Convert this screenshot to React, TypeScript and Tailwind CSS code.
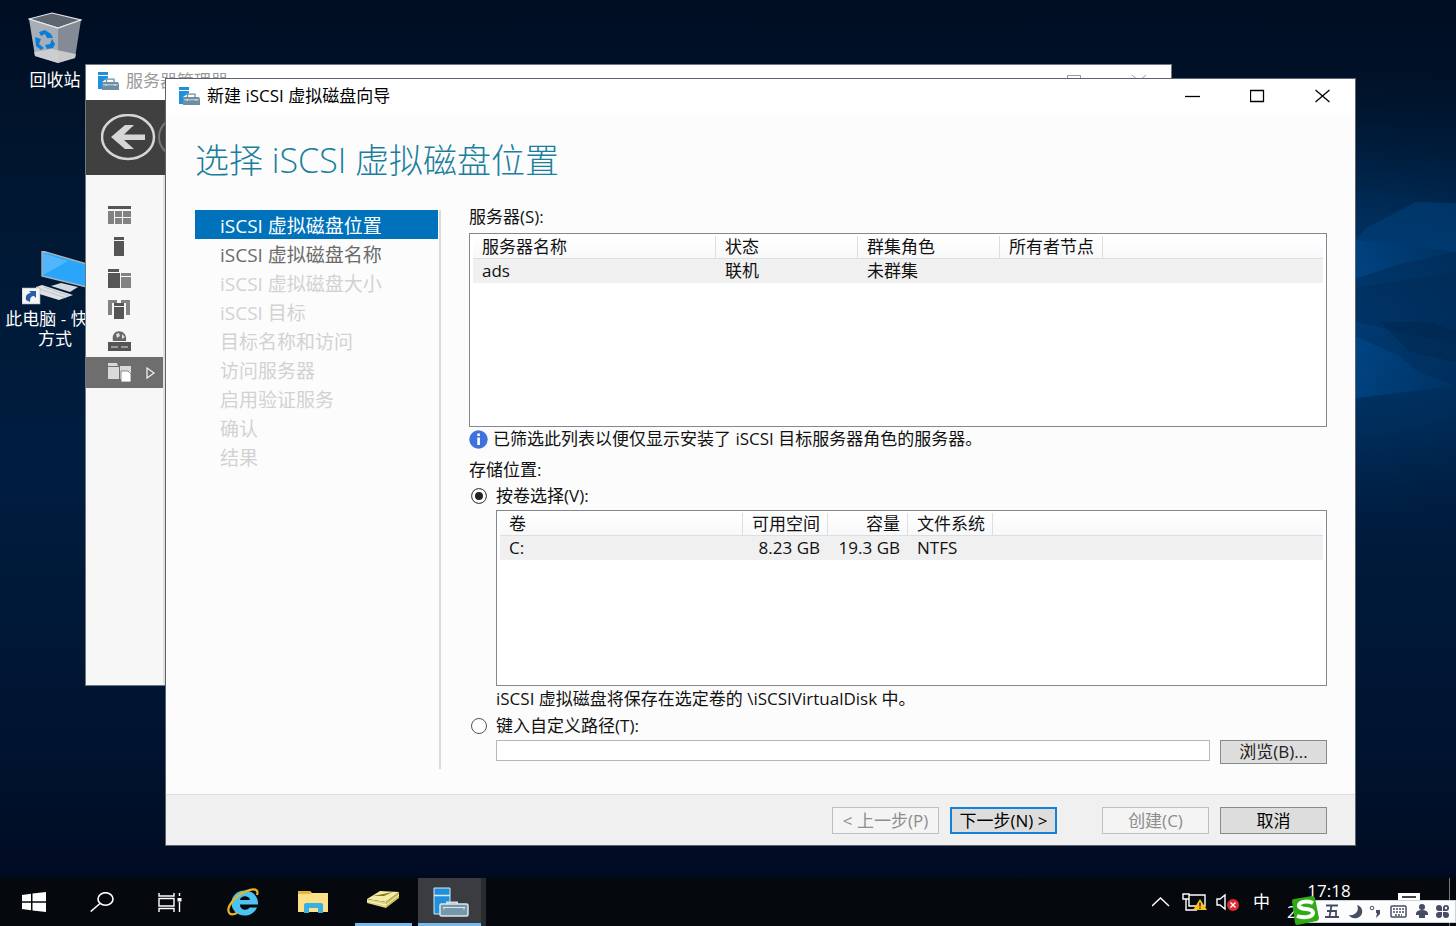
import { useState } from "react";

const steps = [
  { label: "iSCSI 虚拟磁盘位置", state: "active" },
  { label: "iSCSI 虚拟磁盘名称", state: "next" },
  { label: "iSCSI 虚拟磁盘大小", state: "off" },
  { label: "iSCSI 目标", state: "off" },
  { label: "目标名称和访问", state: "off" },
  { label: "访问服务器", state: "off" },
  { label: "启用验证服务", state: "off" },
  { label: "确认", state: "off" },
  { label: "结果", state: "off" },
];

const stepStyles: Record<string, string> = {
  active: "bg-[#0072bc] text-white",
  next: "text-[#6b6b6b]",
  off: "text-[#d2d2d2]",
};

function Wallpaper() {
  return (
    <svg className="absolute inset-0 h-full w-full" viewBox="0 0 1456 926" preserveAspectRatio="none" aria-hidden="true">
      <defs>
        <linearGradient id="base" x1="0" y1="0" x2="0" y2="1">
          <stop offset="0" stopColor="#000d22" />
          <stop offset="0.2" stopColor="#001731" />
          <stop offset="0.5" stopColor="#001d40" />
          <stop offset="0.8" stopColor="#001430" />
          <stop offset="0.95" stopColor="#000b22" />
        </linearGradient>
        <radialGradient id="glow" gradientUnits="userSpaceOnUse" cx="0" cy="0" r="1" gradientTransform="translate(1340 320) scale(420 250)">
          <stop offset="0" stopColor="#003c74" />
          <stop offset="0.45" stopColor="#003263" stopOpacity="0.75" />
          <stop offset="1" stopColor="#001a3a" stopOpacity="0" />
        </radialGradient>
        <linearGradient id="shard" x1="0" y1="0" x2="1" y2="0">
          <stop offset="0" stopColor="#00509a" stopOpacity="0.6" />
          <stop offset="1" stopColor="#004078" stopOpacity="0.25" />
        </linearGradient>
      </defs>
      <rect width="1456" height="926" fill="url(#base)" />
      <rect width="1456" height="926" fill="url(#glow)" />
      <path d="M1366 228 L1416 202 L1456 203 V252 L1356 240 Z" fill="#004684" opacity="0.45" />
      <path d="M1340 238 L1456 252 L1400 264 L1340 284 Z" fill="url(#shard)" />
      <path d="M1340 290 L1456 272 V345 L1340 318 Z" fill="#00274f" opacity="0.35" />
      <path d="M1380 322 H1430 L1456 332 V362 L1410 352 Z" fill="#002144" opacity="0.35" />
      <path d="M1340 330 L1400 356 L1418 372 L1456 386 L1340 400 Z" fill="url(#shard)" />
    </svg>
  );
}

function ServerManagerIcon({ className }: { className: string }) {
  return (
    <svg className={className} viewBox="0 0 36 30" aria-hidden="true">
      <path d="M1 1H17V27H1Z" fill="#2190dc" stroke="#d5eaf8" strokeWidth="1" />
      <path d="M1 8.5H17" stroke="#d5eaf8" strokeWidth="1.5" />
      <path d="M14 17V15.5H24V17" fill="none" stroke="#d3dee5" strokeWidth="2" />
      <rect x="7" y="17" width="28" height="12" rx="1.5" fill="#7797aa" stroke="#dce6ec" strokeWidth="1.5" />
      <path d="M10 20.5H32M11 20V22.5M31 20V22.5" stroke="#dce6ec" />
    </svg>
  );
}

function ToolboxIcon() {
  return (
    <svg className="h-[18px] w-[21px]" viewBox="0 0 21 18" aria-hidden="true">
      <path d="M0 0H10V3H0ZM0 4H10V6L4 10V17H0Z" fill="#2190dc" />
      <path d="M8.5 10V7.2H16V10" fill="none" stroke="#6d8fa3" strokeWidth="1.3" />
      <path d="M4 10H20L21 12V18H4Z" fill="#6d8fa3" />
      <path d="M5 12.8H20" stroke="#c9d7df" />
      <path d="M8 12V14M17 12V14" stroke="#e2eaef" />
    </svg>
  );
}

function DesktopIcons() {
  return (
    <div className="flex w-[110px] flex-col items-center text-[17px] leading-5 text-white">
      <div className="mt-3 flex flex-col items-center">
        <svg className="h-[52px] w-[54px]" viewBox="0 0 54 52" aria-hidden="true">
          <path d="M1 7L24 1L53 8L30 16Z" fill="#5f6670" stroke="#dfe3e6" strokeWidth="1.2" />
          <path d="M1 7L30 16V51L7 44Z" fill="#a8aeb8" />
          <path d="M30 16L53 8L47 46L30 51Z" fill="#848b96" />
          <path d="M6 40L24 37L48 42L47 46L30 51L7 44Z" fill="#d2d3d4" opacity="0.85" />
          <path d="M1 7L30 16L53 8" fill="none" stroke="#e6e9eb" strokeWidth="1.3" />
          <path d="M11 20L17 18L23 22L25 26L19 26L17 22L13 24ZM7 25L13 27L11 32L16 36L13 38L8 34ZM24 27L27 32L25 36L19 37L17 33L22 32Z" fill="#0a7ddb" />
        </svg>
        <span className="mt-1.5">回收站</span>
      </div>
      <div className="mt-[161px] flex flex-col items-center">
        <svg className="h-[54px] w-[66px]" viewBox="0 0 66 54" aria-hidden="true">
          <path d="M20 0L65 13V36L20 25Z" fill="#29a6fa" stroke="#a9b4ba" strokeWidth="1.4" />
          <path d="M21 2L46 10L21 24Z" fill="#63bdfb" opacity="0.7" />
          <path d="M29 35L39 32L56 36L48 41Z" fill="#d3d9dd" />
          <path d="M14 36L20 34L51 44L37 49L14 42Z" fill="#dde1e4" />
          <path d="M18 38L44 47M22 36L47 45" stroke="#b3bac0" strokeWidth="0.8" />
          <rect x="0" y="37" width="18" height="16" fill="#f5f5f5" stroke="#aaa" strokeWidth="0.6" />
          <path d="M4 49C3 44 6 42 9 42L7 40H14V47L12 45C9 45 8 47 8 51Z" fill="#2a5caa" />
        </svg>
        <span className="mt-1 w-[108px] text-center">此电脑 - 快捷方式</span>
      </div>
    </div>
  );
}

function ManagerWindow() {
  return (
    <section className="absolute top-16 right-[284px] left-[85px] border border-[#6f7780] bg-white">
      <header className="flex h-[35px] items-center bg-white pb-[3px] pl-3 text-[17px] text-[#9a9a9a]">
        <ToolboxIcon />
        <span className="ml-[7px]">服务器管理器</span>
        <svg className="mr-6 ml-auto h-4 w-20" viewBox="0 0 80 16" fill="none" stroke="#999" aria-hidden="true">
          <path d="M.5 2.5H13.5V13H.5ZM65 2L79 14M79 2L65 14" />
        </svg>
      </header>
      <div className="h-[75px] overflow-hidden bg-[#404040] pl-[15px]">
        <svg className="mt-3.5 h-[48px] w-[90px]" viewBox="0 0 90 48" fill="none" aria-hidden="true">
          <ellipse cx="27" cy="23" rx="26" ry="22" stroke="#d6d6d6" strokeWidth="2.5" />
          <ellipse cx="84" cy="23" rx="26" ry="22" stroke="#777" strokeWidth="2" />
          <path d="M10 23L24 11H33L23 20.500H44V26H23L33 35H24Z" fill="#d6d6d6" />
        </svg>
      </div>
      <nav className="w-[79px] border-r-2 border-[#e0e0e0] bg-[#f7f7f7] pt-[25px]">
        <svg className="ml-[22px] h-[154px] w-6" viewBox="0 0 24 154" aria-hidden="true">
          <path d="M0 6H23V9H0Z" fill="#555" />
          <path d="M0 11H6V24H0ZM7 11H14V17H7ZM15 11H23V17H15ZM7 18H14V24H7ZM15 18H23V24H15Z" fill="#828282" />
          <path d="M6 37H16V40H6ZM6 41H16V56H6Z" fill="#555" />
          <path d="M0 69H11V72H0ZM0 73H12V88H0Z" fill="#555" />
          <path d="M13 73H23V76H13ZM13 77H23V88H13Z" fill="#828282" />
          <path d="M0 100H9V103H4V115H0ZM13 100H22V115H18V103H13Z" fill="#828282" />
          <path d="M6 103H16V106H6ZM6 107H16V119H6Z" fill="#555" />
          <path d="M5 141C2 128 20 128 18 141Z" fill="#666" />
          <path d="M8 134L11 133L12 136L9 138ZM14 134L17 137L14 139Z" fill="#ddd" />
          <path d="M0 142H23V151H0Z" fill="#555" />
          <path d="M3 147H10M13 147H20" stroke="#ddd" />
        </svg>
        <div className="mt-[3px] flex h-[31px] items-center bg-[#6e6e6e] pl-[22px]">
          <svg className="h-[21px] w-[50px]" viewBox="0 0 50 21" aria-hidden="true">
            <path d="M0 1H9L10 4H0ZM0 5H11V17H0ZM12 4H23V17H12Z" fill="#d9d9d9" />
            <path d="M13 9H20L23 12V20H13Z" fill="#fff" stroke="#6e6e6e" strokeWidth="0.8" />
            <path d="M39 6L46 11L39 16Z" fill="none" stroke="#eee" strokeWidth="1.3" />
          </svg>
        </div>
        <div className="h-[297px]" />
      </nav>
    </section>
  );
}

function CaptionButtons() {
  return (
    <div className="ml-auto flex text-black">
      <button aria-label="最小化" className="flex h-[34px] w-[65px] items-center justify-center">
        <svg className="h-[14px] w-[15px]" viewBox="0 0 15 14" stroke="currentColor" strokeWidth="1.3"><path d="M0 7.5H15" /></svg>
      </button>
      <button aria-label="最大化" className="flex h-[34px] w-[65px] items-center justify-center">
        <svg className="h-[14px] w-[15px]" viewBox="0 0 15 14" fill="none" stroke="currentColor" strokeWidth="1.3"><path d="M.5 1.500H13.500V12.500H.5Z" /></svg>
      </button>
      <button aria-label="关闭" className="flex h-[34px] w-[65px] items-center justify-center">
        <svg className="h-[14px] w-[15px]" viewBox="0 0 15 14" stroke="currentColor" strokeWidth="1.3"><path d="M.5 1L14.5 13M14.5 1L.5 13" /></svg>
      </button>
    </div>
  );
}

const th = "h-[23px] border-r border-b border-[#dedede] px-[9px] text-left font-normal";
const td = "h-6 px-[9px]";

function ServerTable() {
  return (
    <div className="h-[194px] border border-[#828790] bg-white px-[3px] pt-[2px]">
      <table aria-label="服务器" className="w-full table-fixed border-separate border-spacing-0 leading-5 whitespace-nowrap">
        <colgroup>
          <col className="w-[243px]" />
          <col className="w-[142px]" />
          <col className="w-[142px]" />
          <col className="w-[103px]" />
          <col />
        </colgroup>
        <thead>
          <tr className="bg-linear-to-b from-white to-[#f7f8fa]">
            <th className={th}>服务器名称</th>
            <th className={th}>状态</th>
            <th className={th}>群集角色</th>
            <th className={th}>所有者节点</th>
            <th className="border-b border-[#dedede]" />
          </tr>
        </thead>
        <tbody>
          <tr className="bg-[#f0f0f0]">
            <td className={td}>ads</td>
            <td className={td}>联机</td>
            <td className={td}>未群集</td>
            <td />
            <td />
          </tr>
        </tbody>
      </table>
    </div>
  );
}

function VolumeTable() {
  return (
    <div className="h-[176px] border border-[#828790] bg-white px-[3px] pt-[2px]">
      <table aria-label="卷" className="w-full table-fixed border-separate border-spacing-0 leading-5 whitespace-nowrap">
        <colgroup>
          <col className="w-[243px]" />
          <col className="w-[85px]" />
          <col className="w-[80px]" />
          <col className="w-[85px]" />
          <col />
        </colgroup>
        <thead>
          <tr className="bg-linear-to-b from-white to-[#f7f8fa]">
            <th className={th}>卷</th>
            <th className="h-[23px] border-r border-b border-[#dedede] pr-[7px] text-right font-normal">可用空间</th>
            <th className="h-[23px] border-r border-b border-[#dedede] pr-[7px] text-right font-normal">容量</th>
            <th className={th}>文件系统</th>
            <th className="border-b border-[#dedede]" />
          </tr>
        </thead>
        <tbody>
          <tr className="bg-[#f0f0f0]">
            <td className={td}>C:</td>
            <td className="h-6 pr-2 text-right">8.23 GB</td>
            <td className="h-6 pr-2 text-right">19.3 GB</td>
            <td className={td}>NTFS</td>
            <td />
          </tr>
        </tbody>
      </table>
    </div>
  );
}

const radio =
  "size-4 shrink-0 appearance-none rounded-full border border-[#555] bg-white checked:bg-[#222] checked:shadow-[inset_0_0_0_3px_white]";
const button = "h-[27px] w-[107px] border border-[#8a8a8a] bg-[#dddddd] leading-5 whitespace-nowrap text-black";
const disabledButton = "h-[27px] w-[107px] border border-[#bcc0c4] bg-[#f4f4f4] leading-5 whitespace-nowrap text-[#8d8d8d]";

function WizardDialog() {
  const [mode, setMode] = useState("volume");

  return (
    <section
      role="dialog"
      aria-labelledby="wizard-title"
      className="absolute top-[78px] right-[100px] left-[165px] border border-[#5c636b] bg-[#fcfcfc] text-[17px] leading-5 text-[#111]"
    >
      {/* Title bar */}
      <header className="flex h-[34px] items-center bg-white pl-[13px]">
        <ToolboxIcon />
        <h1 id="wizard-title" className="ml-[7px] text-black">新建 iSCSI 虚拟磁盘向导</h1>
        <CaptionButtons />
      </header>

      <h2 className="flex h-[94px] items-center pl-[29px] text-[34px] font-light text-[#1a7f9c]">选择 iSCSI 虚拟磁盘位置</h2>

      <div className="flex pr-7 pb-[25px] pl-[29px]">
        {/* Steps */}
        <nav className="mt-[3px] w-[246px] shrink-0 border-r-2 border-[#dadada] pr-px">
          <ol className="text-[19px]">
            {steps.map((step) => (
              <li key={step.label} className={`h-[29px] pt-[3px] pl-[25px] leading-[26px] ${stepStyles[step.state]}`}>
                {step.label}
              </li>
            ))}
          </ol>
        </nav>

        {/* Location */}
        <div className="ml-7 min-w-0 flex-1 pb-[5px]">
          <p className="mb-1 h-[22px]">服务器(S):</p>
          <ServerTable />
          <p className="flex h-6 items-center gap-[5px]">
            <svg className="size-[19px] shrink-0" viewBox="0 0 19 19" aria-hidden="true">
              <circle cx="9.5" cy="9.5" r="9.2" fill="#3f72dd" />
              <path d="M8.3 3.5H10.9V6H8.3ZM8.3 7.5H10.9V15H8.3Z" fill="#fff" />
            </svg>
            已筛选此列表以便仅显示安装了 iSCSI 目标服务器角色的服务器。
          </p>

          <fieldset className="pt-[9px]">
            <legend className="float-left h-5">存储位置:</legend>
            <label className="clear-both flex h-[26px] items-center gap-[9px] pt-1.5 pl-0.5">
              <input type="radio" name="location" checked={mode === "volume"} onChange={() => setMode("volume")} className={radio} />
              按卷选择(V):
            </label>
            <div className="mt-1 pl-[27px]">
              <VolumeTable />
              <p className="h-[26px] leading-[26px]">iSCSI 虚拟磁盘将保存在选定卷的 \iSCSIVirtualDisk 中。</p>
            </div>
            <label className="mt-1 flex h-5 items-center gap-[9px] pl-0.5">
              <input type="radio" name="location" checked={mode === "path"} onChange={() => setMode("path")} className={radio} />
              键入自定义路径(T):
            </label>
            <div className="mt-1 flex gap-2.5 pl-[27px]">
              <input type="text" aria-label="自定义路径" disabled={mode !== "path"} className="h-[21px] min-w-0 flex-1 border border-[#b4b8bd] bg-white px-1" />
              <button className="h-6 w-[107px] border border-[#8a8a8a] bg-[#dddddd] leading-5 text-[#222]">浏览(B)...</button>
            </div>
          </fieldset>
        </div>
      </div>

      {/* Actions */}
      <footer className="flex h-[51px] justify-end gap-[11px] border-t border-[#dedede] bg-[#f0f0f0] pt-3 pr-7">
        <button disabled className={disabledButton}>&lt; 上一步(P)</button>
        <button className="mr-[34px] h-[27px] w-[107px] border-2 border-[#1582d8] bg-[#dddddd] leading-5 whitespace-nowrap text-black">下一步(N) &gt;</button>
        <button disabled className={disabledButton}>创建(C)</button>
        <button className={button}>取消</button>
      </footer>
    </section>
  );
}

function ImeBar() {
  return (
    <div className="absolute right-0 bottom-[3px] flex h-[23px] w-[152px] items-center border border-[#c8d3e2] bg-[#fdfdfe] pl-[19px]">
      <svg className="absolute -top-[5px] -left-[15px] h-[29px] w-[30px]" viewBox="0 0 30 29" aria-hidden="true">
        <path d="M2 5Q2 3 4 3L22 0Q24 0 25 2L29 22Q29 24 27 25L7 29Q5 29 5 27Z" fill="#2fac15" />
        <path d="M23 7C17 4 8 6 9 10C10 15 23 11 23 17C22 22 12 22 7 20" fill="none" stroke="#fff" strokeWidth="4" />
      </svg>
      <svg className="h-[21px] w-[130px]" viewBox="0 0 130 21" fill="#454c63" aria-hidden="true">
        <path d="M2 4.5H14M1 16H15M7.5 4.5L5.5 16M3 10H12V16" fill="none" stroke="#454c63" strokeWidth="1.8" />
        <path d="M33 4C40 6 40 15 33 17C29 18 26 16 25 14C31 15 36 10 33 4Z" />
        <circle cx="48" cy="7" r="1.8" fill="none" stroke="#454c63" />
        <path d="M52 9H56V13L52 17L53 12H52Z" />
        <rect x="67" y="5" width="15" height="11" rx="1" fill="none" stroke="#454c63" strokeWidth="1.5" />
        <path d="M69 8H80M69 11H80M71 14H78" stroke="#454c63" strokeWidth="1.6" strokeDasharray="2 1" />
        <circle cx="98" cy="6" r="3" />
        <path d="M92 12Q93 9 98 9T104 12V14H101V17H95V14H92Z" />
        <path d="M112 7A3 3 0 1 1 118 7V10H115A3 3 0 0 1 112 7ZM119 7A3 3 0 1 1 122 10H119ZM112 14A3 3 0 0 1 115 11H118V14A3 3 0 0 1 112 14ZM119 11H122A3 3 0 1 1 119 14Z" />
        <circle cx="122" cy="7" r="1.2" fill="#fdfdfe" />
      </svg>
    </div>
  );
}

function Taskbar() {
  return (
    <footer className="relative mt-auto flex h-12 items-center bg-[#05080d] text-white">
      <button aria-label="开始" className="flex h-12 w-[68px] items-center justify-center">
        <svg className="h-5 w-6" viewBox="0 0 24 20" fill="currentColor"><path d="M0 3L9 1.8V9.2H0ZM10.5 1.5L24 0V9.2H10.5ZM0 10.8H9V18.2L0 17ZM10.5 10.8H24V20L10.5 18.5Z" /></svg>
      </button>
      <button aria-label="搜索" className="flex h-12 w-[68px] items-center justify-center">
        <svg className="h-5 w-6" viewBox="0 0 24 20" fill="none" stroke="currentColor" strokeWidth="1.6"><ellipse cx="15.5" cy="7" rx="7.5" ry="6.3" /><path d="M10 11.5L.7 19.5" /></svg>
      </button>
      <button aria-label="任务视图" className="flex h-12 w-[68px] items-center justify-center">
        <svg className="h-5 w-6" viewBox="0 0 24 20" fill="none" stroke="currentColor" strokeWidth="1.4"><path d="M1 1V4H16V1M1 6.5H16V14H1ZM1 20V16.5H16V20M21.5 1V4M21.5 10V20" /><path d="M19.5 6H23.5V9.5H19.5Z" fill="currentColor" stroke="none" /></svg>
      </button>
      <button aria-label="Internet Explorer" className="ml-1 flex h-12 w-[70px] items-center justify-center">
        <svg className="h-7 w-8" viewBox="0 0 32 28">
          <path fillRule="evenodd" d="M31 16.5H13C13 22 20 23.500 22.500 19.500H30C28 24.500 23 27.500 17.500 27.500C10 27.500 4.500 22 4.500 15C4.500 8 10 2.500 17.500 2.500C26 2.500 31.500 8.500 31 16.500ZM13 12H23C22.500 7 13.500 7 13 12Z" fill="#4cc3f2" />
          <path d="M30 7C32 1 27 0 19.500 3C8 8 -1 19 2 24.500C3.500 27.500 7 26.500 10 25" fill="none" stroke="#edb51c" strokeWidth="2.2" />
        </svg>
      </button>
      <button aria-label="文件资源管理器" className="flex h-12 w-[70px] items-center justify-center">
        <svg className="h-[22px] w-8" viewBox="0 0 32 22">
          <path d="M1 0H13L15 2H31V21H1Z" fill="#ffe08a" />
          <path d="M1 0H13L14 3H1Z" fill="#e8b62f" />
          <path d="M7 22V14Q7 12 9 12H24Q26 12 26 14V22H21V17H12V22Z" fill="#37b0e4" />
        </svg>
      </button>
      <button aria-label="存储" className="flex h-12 w-[70px] flex-col items-center">
        <svg className="mt-3 h-[19px] w-[34px]" viewBox="0 0 34 19">
          <path d="M1 9L14 1L33 2L20 12Z" fill="#f2eca6" />
          <path d="M1 9L20 12V18L1 13Z" fill="#e0d680" />
          <path d="M20 12L33 2V8L20 18Z" fill="#c9bb59" />
          <path d="M7 6L27 2L18 6Z" fill="#8a7526" />
          <path d="M1 11L20 15L33 5" fill="none" stroke="#fbf7cc" />
        </svg>
        <span className="mt-auto h-[3px] w-[57px] bg-[#76b9ed]" />
      </button>
      <button aria-label="服务器管理器" className="flex h-12 w-[68px] flex-col items-center border-r-[5px] border-[#292c2f] bg-[#3a3c40]">
        <ServerManagerIcon className="mt-[9px] ml-0.5 h-[30px] w-9" />
        <span className="mt-auto h-[3px] w-full bg-[#76b9ed]" />
      </button>

      {/* Tray */}
      <div className="ml-auto flex h-12 items-center">
        <svg className="h-[22px] w-[92px]" viewBox="0 0 92 22" fill="none" stroke="#fff" strokeWidth="1.4" aria-hidden="true">
          <path d="M0 15L8.500 7L17 15" />
          <path d="M37 4H53V15H37V8M31 3H37V8H31ZM34 8V19H45" />
          <path d="M48 8L55 19H41Z" fill="#ffc21c" stroke="none" />
          <path d="M48 11.5V15.5M48 16.5V18" stroke="#222" />
          <path d="M65 8H68L73 4V18L68 14H65Z" />
          <circle cx="81" cy="14" r="6" fill="#da2a33" stroke="none" />
          <path d="M78.5 11.5L83.5 16.5M83.5 11.5L78.5 16.5" />
        </svg>
        <span className="ml-[9px] text-[17px]">中</span>
        <div className="ml-[17px] flex h-12 w-[84px] flex-col pt-0.5 text-[17px] leading-[21px]">
          <time className="text-center">17:18</time>
          <span>2</span>
        </div>
        <svg className="ml-[26px] h-[18px] w-6" viewBox="0 0 24 18" aria-hidden="true">
          <path d="M1 0H23V14H17V18L12 14H1Z" fill="#fff" />
          <path d="M5 4H19M5 8H19" stroke="#05080d" strokeWidth="1.3" />
        </svg>
        <span className="mr-1.5 ml-7 h-12 w-px bg-[#777]" />
      </div>
      <ImeBar />
    </footer>
  );
}

export default function App() {
  return (
    <main className="relative flex min-h-screen min-w-[1000px] flex-col overflow-hidden bg-[#00132c] font-['Open_Sans','Noto_Sans_CJK_SC',sans-serif]">
      <Wallpaper />
      <div className="relative min-h-[878px]">
        <DesktopIcons />
        <ManagerWindow />
        <WizardDialog />
      </div>
      <Taskbar />
    </main>
  );
}
